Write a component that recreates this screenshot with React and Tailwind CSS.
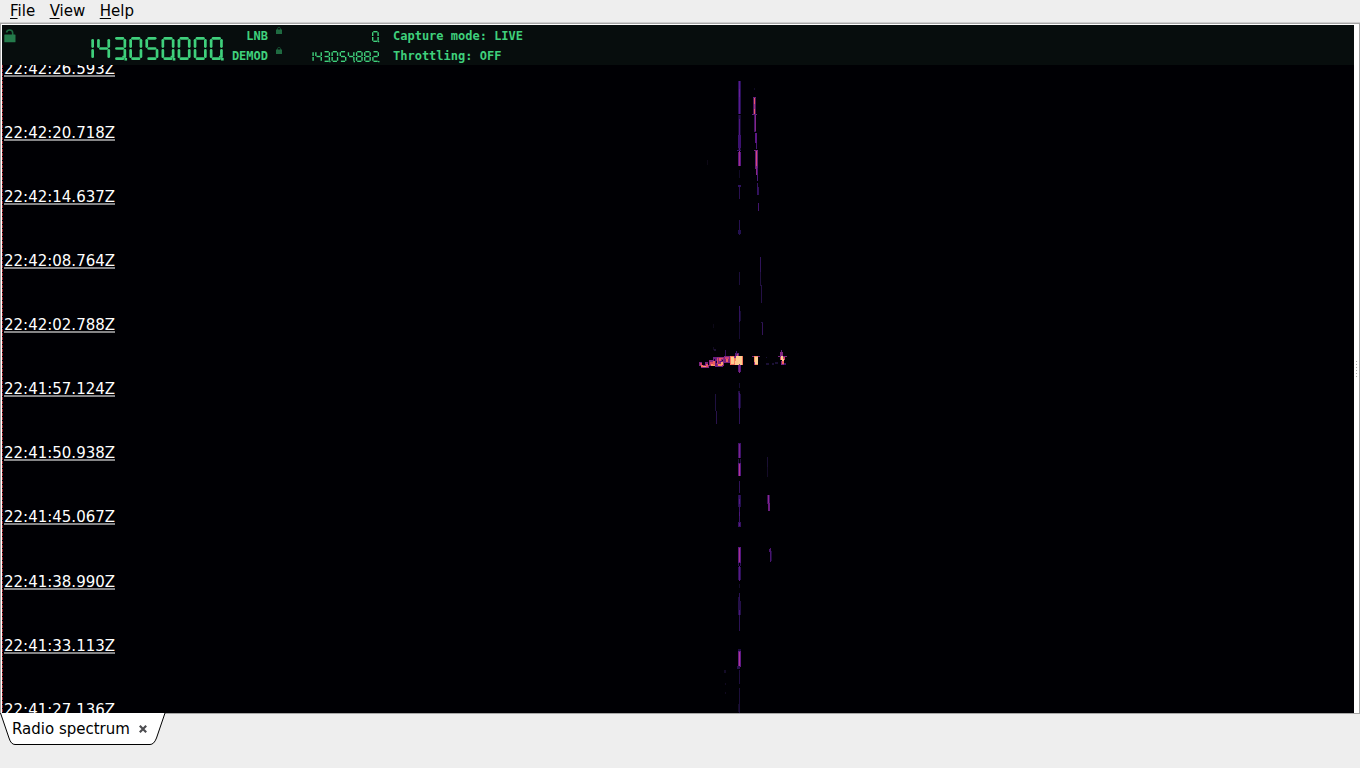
import React from 'react';

const menus = ['File', 'View', 'Help'];

const timestamps = [
    { time: '22:42:26.593Z', row: 'h-[64px]' },
    { time: '22:42:20.718Z', row: 'h-[64px]' },
    { time: '22:42:14.637Z', row: 'h-[64px]' },
    { time: '22:42:08.764Z', row: 'h-[64px]' },
    { time: '22:42:02.788Z', row: 'h-[64px]' },
    { time: '22:41:57.124Z', row: 'h-[64px]' },
    { time: '22:41:50.938Z', row: 'h-[64px]' },
    { time: '22:41:45.067Z', row: 'h-[64px]' },
    { time: '22:41:38.990Z', row: 'h-[65px]' },
    { time: '22:41:33.113Z', row: 'h-[64px]' },
    { time: '22:41:27.136Z', row: 'h-[64px]' },
];

// Lit segments of each digit: a top, b/c right, d bottom, e/f left, g middle
const segments = {
    0: 'abcdef',
    1: 'bc',
    2: 'abdeg',
    3: 'abcdg',
    4: 'bcfg',
    5: 'acdfg',
    6: 'acdefg',
    7: 'abc',
    8: 'abcdefg',
    9: 'abcdfg',
};

// Echoes on the waterfall: x, y, width, height, colour
const echoes = [
    // carrier, upper part
    [738, 81, 3, 33, '#2a1058'], [739, 81, 1, 33, '#5a1a90'], [739, 89, 1, 8, '#6a1f98'],
    [738, 115, 3, 36, '#180b34'], [739, 115, 1, 4, '#2b1052'], [739, 119, 1, 31, '#521684'], [738, 135, 3, 13, '#3d1270'],
    [737, 150, 4, 1, '#3c1170'], [738, 152, 3, 14, '#5b1781'], [739, 151, 1, 15, '#a2308c'],
    [739, 170, 1, 8, '#120a28'], [738, 185, 3, 2, '#2f1360'], [739, 187, 1, 12, '#2a1052'],
    [739, 220, 1, 15, '#271052'], [738, 230, 3, 4, '#231050'],
    [739, 272, 1, 13, '#1c0e3c'], [739, 306, 1, 16, '#30125e'], [740, 311, 1, 10, '#180c35'], [739, 322, 1, 17, '#160b32'],
    // drifting echo
    [754, 88, 1, 2, '#100a25'], [753, 97, 3, 1, '#64207f'], [753, 98, 3, 16, '#4c165f'], [754, 98, 1, 6, '#ef5667'],
    [754, 104, 1, 5, '#a1337f'], [754, 109, 1, 5, '#f05768'], [752, 114, 5, 1, '#61207a'],
    [754, 115, 2, 17, '#451468'], [755, 115, 1, 16, '#842786'], [755, 133, 2, 10, '#5c1785'], [756, 143, 1, 6, '#491674'],
    [754, 150, 4, 1, '#7d2482'], [755, 151, 3, 18, '#64207c'], [756, 151, 1, 15, '#d9477a'], [756, 166, 1, 9, '#8b2981'],
    [757, 168, 1, 13, '#4b157a'], [757, 183, 1, 12, '#351262'], [758, 187, 1, 8, '#301259'], [758, 203, 1, 8, '#43146e'],
    [760, 257, 1, 15, '#2f135a'], [760, 272, 1, 14, '#20103e'], [761, 285, 1, 18, '#241046'],
    [761, 322, 2, 1, '#221045'], [762, 323, 1, 12, '#321358'],
    // fragments left of the carrier
    [707, 160, 1, 5, '#0d0816'], [713, 324, 1, 4, '#0c0818'], [713, 347, 1, 3, '#120b22'], [714, 349, 2, 2, '#1d1033'],
    [715, 394, 1, 17, '#1e1040'], [716, 411, 1, 13, '#28124c'],
    [724, 670, 2, 3, '#130b28'], [725, 683, 1, 2, '#100920'], [725, 692, 1, 2, '#100920'],
    // broad burst, dim fringe
    [699, 362, 3, 4, '#7a2380'], [701, 365, 8, 3, '#8c2980'], [705, 362, 3, 4, '#7a2380'], [709, 360, 5, 6, '#8c2980'],
    [713, 357, 5, 9, '#6b1f80'], [717, 357, 7, 9, '#8c2980'], [724, 356, 6, 7, '#7a2380'], [715, 366, 8, 1, '#6b1f80'],
    // broad burst
    [700, 363, 2, 2, '#cb3f74'], [701, 365, 2, 2, '#f8765c'], [703, 366, 4, 1, '#fb9f6c'],
    [706, 364, 2, 3, '#e75263'], [710, 362, 3, 3, '#dc4869'], [711, 364, 4, 2, '#fe9969'], [713, 361, 2, 4, '#f1605d'],
    [714, 359, 1, 2, '#15082c'], [716, 361, 1, 2, '#15082c'], [717, 358, 1, 6, '#de4968'],
    [718, 364, 4, 2, '#fc8961'], [719, 358, 2, 3, '#e95462'], [720, 361, 2, 1, '#5a167e'],
    [721, 362, 2, 3, '#fe9f6d'], [721, 358, 2, 1, '#de4968'], [717, 356, 2, 1, '#000004'], [722, 360, 1, 1, '#15082c'],
    [725, 350, 1, 6, '#30105c'], [725, 357, 4, 2, '#ca3e72'], [726, 359, 2, 3, '#f1605d'],
    [730, 356, 13, 9, '#f8765c'], [731, 357, 3, 7, '#ffca8d'], [734, 356, 2, 2, '#812581'], [734, 359, 2, 4, '#fc8961'],
    [736, 356, 6, 9, '#ffcf92'], [735, 361, 3, 4, '#ffca8d'], [735, 353, 4, 3, '#61207a'], [736, 351, 1, 3, '#40126c'],
    [737, 354, 1, 2, '#ca3e72'], [738, 365, 3, 7, '#54167a'], [739, 364, 1, 9, '#812581'],
    [752, 356, 8, 1, '#7a2480'], [754, 356, 4, 9, '#fc9065'], [755, 357, 3, 7, '#ffcf92'], [754, 362, 1, 3, '#983180'],
    [766, 357, 1, 1, '#1a1035'], [766, 363, 3, 2, '#1a1035'], [772, 363, 2, 2, '#1a1035'], [775, 362, 3, 2, '#1a1035'],
    [781, 350, 1, 6, '#64207c'], [780, 352, 3, 4, '#812581'], [778, 356, 9, 1, '#7a2480'], [780, 357, 5, 3, '#d0466f'],
    [781, 356, 2, 4, '#ffcf92'], [782, 359, 2, 2, '#ffca8d'], [781, 361, 3, 4, '#812581'], [782, 361, 2, 3, '#f1605d'],
    [784, 363, 2, 2, '#40126c'],
    // carrier, lower part
    [739, 383, 1, 5, '#180d35'], [738, 391, 2, 3, '#241045'], [738, 394, 3, 14, '#1c0d3e'], [739, 393, 1, 16, '#46147a'],
    [739, 409, 1, 15, '#2c1256'],
    [738, 443, 3, 15, '#40126a'], [739, 444, 1, 14, '#7e248f'], [738, 459, 1, 4, '#231040'], [740, 459, 1, 4, '#231040'],
    [738, 463, 3, 13, '#571780'], [739, 464, 1, 12, '#b53695'], [739, 481, 1, 12, '#32125a'],
    [738, 495, 3, 12, '#261050'], [739, 495, 1, 32, '#3a1368'], [739, 499, 1, 5, '#5a1a88'], [739, 512, 1, 4, '#4d157c'],
    [738, 522, 3, 5, '#351260'], [739, 523, 1, 3, '#5a1a88'],
    [738, 547, 3, 16, '#571780'], [739, 548, 1, 14, '#a83291'], [738, 563, 1, 3, '#2e1158'], [740, 563, 1, 3, '#2e1158'],
    [738, 567, 3, 13, '#2e115a'], [739, 566, 1, 15, '#5a1a86'],
    [739, 584, 1, 4, '#120a28'], [738, 597, 2, 7, '#1f0e42'], [739, 593, 1, 38, '#2c1256'], [738, 601, 3, 14, '#241048'],
    [739, 610, 1, 5, '#4d167e'],
    [738, 649, 3, 2, '#1d0c40'], [738, 651, 3, 16, '#621a86'], [739, 652, 1, 14, '#b0379a'], [737, 666, 3, 3, '#27104c'],
    [739, 670, 1, 14, '#1e0e3e'], [739, 688, 1, 25, '#1c0e3a'], [738, 704, 1, 8, '#130b28'],
    // second echo, lower part
    [767, 457, 1, 10, '#1a0f34'], [767, 467, 1, 10, '#140b28'],
    [767, 495, 3, 9, '#380f58'], [768, 495, 1, 8, '#8f2793'], [768, 503, 2, 8, '#6b1c80'],
    [770, 548, 1, 14, '#4a1470'], [769, 549, 2, 3, '#4a1470'], [771, 551, 1, 10, '#1f0e40'],
];

const SevenSegment = ({ value, pitch, w, h, stroke, gap, className }) => {
    const r = stroke / 2;
    const mid = h / 2;
    const lines = {
        a: [r + gap, r, w - r - gap, r],
        b: [w - r, r + gap, w - r, mid - gap],
        c: [w - r, mid + gap, w - r, h - r - gap],
        d: [r + gap, h - r, w - r - gap, h - r],
        e: [r, mid + gap, r, h - r - gap],
        f: [r, r + gap, r, mid - gap],
        g: [r + gap, mid, w - r - gap, mid],
    };
    const dot = stroke * 0.65;

    return (
        <svg
            width={Math.ceil(pitch * value.length)}
            height={h + 2}
            className={className}
            role="img"
            aria-label={value}
        >
            {value.split('').map((digit, i) => (
                <g key={i} transform={`translate(${i * pitch} 0)`}>
                    {segments[digit].split('').map(s => (
                        <line
                            key={s}
                            x1={lines[s][0]}
                            y1={lines[s][1]}
                            x2={lines[s][2]}
                            y2={lines[s][3]}
                            stroke="#3fd07c"
                            strokeWidth={stroke}
                            strokeLinecap={stroke > 2 ? 'round' : 'butt'}
                        />
                    ))}
                    {(value.length - 1 - i) % 3 === 0 && (
                        <g fill="#3fd07c">
                            <rect x={w - dot} y={h - dot * 1.2} width={dot * 1.5} height={dot * 1.5} />
                            {stroke > 2 && <rect x={w - dot * 2.2} y={h - dot * 2.4} width={dot} height={dot} />}
                        </g>
                    )}
                </g>
            ))}
        </svg>
    );
};

const SmallLock = () => (
    <svg width="6" height="7" viewBox="0 0 6 7">
        <path d="M1.5 3V1.5Q1.5 .5 3 .5T4.5 1.5V3" fill="none" stroke="#174a30" strokeWidth="1" />
        <rect y="2.5" width="6" height="4.5" fill="#1f6b41" />
    </svg>
);

const BigLock = () => (
    <svg width="12" height="14" viewBox="0 0 12 14">
        <path d="M2.5 3.5Q3 1 5.5 1Q8.7 1 8.7 4V7" fill="none" stroke="#1e6b41" strokeWidth="1.6" />
        <rect x="0.3" y="5.5" width="11.2" height="7.7" rx="0.5" fill="#247a4b" />
    </svg>
);

const FrequencyBar = () => (
    <div className="flex h-[40px] shrink-0 bg-[#070d0d] font-['DejaVu_Sans_Mono',monospace] text-[12px] font-bold leading-[20px] text-[#3fd07c]">
        <div className="w-[79px] pl-[2px] pt-[4px]">
            <BigLock />
        </div>
        <SevenSegment value="143050000" pitch={16.1} w={13} h={23} stroke={2.7} gap={1.9} className="mt-[12px] shrink-0" />
        <div className="flex w-[42px] flex-col items-end pt-px">
            <span>LNB</span>
            <span>DEMOD</span>
        </div>
        <div className="flex w-[17px] flex-col gap-[13px] pl-[8px] pt-[2px]">
            <SmallLock />
            <SmallLock />
        </div>
        <div className="flex w-[96px] flex-col items-end gap-[7px] pt-[6px]">
            <SevenSegment value="0" pitch={8.15} w={6.8} h={11} stroke={1.4} gap={0.6} />
            <SevenSegment value="143054882" pitch={8.15} w={6.8} h={11} stroke={1.4} gap={0.6} />
        </div>
        <div className="flex flex-col pl-[12px] pt-px">
            <span>Capture mode: LIVE</span>
            <span>Throttling: OFF</span>
        </div>
    </div>
);

const Waterfall = () => (
    <div className="grid h-[648px] overflow-hidden bg-[#000004]">
        <svg
            className="col-start-1 row-start-1"
            width="1352"
            height="648"
            viewBox="2 65 1352 648"
            shapeRendering="crispEdges"
        >
            <line x1="2.5" y1="65" x2="2.5" y2="713" stroke="#a02c32" strokeWidth="1" strokeDasharray="3 1" />
            {echoes.map(([x, y, w, h, fill], i) => (
                <rect key={i} x={x} y={y} width={w} height={h} fill={fill} />
            ))}
        </svg>
        <div className="col-start-1 row-start-1 -mt-[52px] flex h-[720px] flex-col pl-[2px]">
            {timestamps.map(({ time, row }) => (
                <div key={time} className={`flex shrink-0 items-end ${row}`}>
                    <span className="h-[19px] w-[111px] whitespace-nowrap border-b-2 border-[#858587] text-[15px] leading-[22px] text-white">
                        {time}
                    </span>
                </div>
            ))}
        </div>
    </div>
);

const SpectrumTab = () => (
    <div className="grid h-[32px] w-[166px]">
        <svg className="col-start-1 row-start-1" width="166" height="32">
            <path
                d="M0.5 0L9 25Q11 31.5 15 31.5H150Q154 31.5 156.500 25L165 0"
                fill="#fff"
                stroke="#000"
                strokeWidth="1"
            />
        </svg>
        <div className="col-start-1 row-start-1 flex items-center pl-[12px] pb-[1px]">
            <span className="text-[15px] leading-[20px] text-black">Radio spectrum</span>
            <svg className="ml-[9px]" width="8" height="8" viewBox="0 0 8 8">
                <path d="M0.8 0.8L7.2 7.2M7.200 0.8L0.8 7.2" stroke="#4d4d50" strokeWidth="2.2" />
            </svg>
        </div>
    </div>
);

const App = () => {
    return (
        <div className="flex h-[768px] w-[1360px] flex-col overflow-hidden bg-[#eeeeee] font-['DejaVu_Sans',sans-serif]">
            <nav className="flex h-[22px] shrink-0 gap-[14.500px] pl-[10px] text-[15px] leading-[23px] text-black">
                {menus.map(name => (
                    <span key={name}>
                        <span className="underline decoration-1 underline-offset-2">{name[0]}</span>
                        {name.slice(1)}
                    </span>
                ))}
            </nav>
            <div className="h-px shrink-0 bg-[#cfcfcf]" />
            <main className="flex h-[691px] shrink-0 border border-[#a6a6a6] bg-white pl-px pt-px">
                <div className="flex w-[1352px] flex-col">
                    <FrequencyBar />
                    <Waterfall />
                </div>
                <div className="flex w-[5px] flex-col items-center justify-center gap-[2px]">
                    {[0, 1, 2, 3, 4, 5].map(i => (
                        <span key={i} className="h-px w-px bg-[#aaaaaa]" />
                    ))}
                </div>
            </main>
            <div className="-mt-px">
                <SpectrumTab />
            </div>
        </div>
    );
};

export default App;
